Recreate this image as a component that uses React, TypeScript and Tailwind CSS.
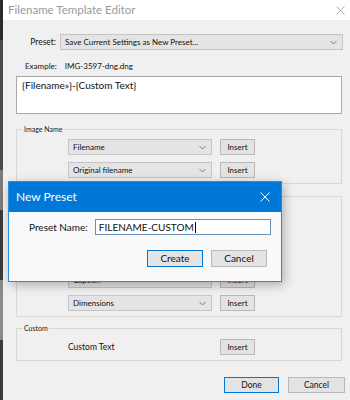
import React from "react";

function Chevron() {
  return (
    <svg width="7" height="5" viewBox="0 0 7 5" className="shrink-0">
      <path d="M0.5 1 L3.5 4 L6.5 1" fill="none" stroke="#707070" strokeWidth="0.9" />
    </svg>
  );
}

function Select({ label, w }: { label: string; w: string }) {
  return (
    <div className={`${w} h-[16px] flex items-center justify-between border border-[#c4c4c4] bg-[#e4e4e4] pl-[4px] pr-[5px] text-[8px] text-[#111]`}>
      <span>{label}</span>
      <Chevron />
    </div>
  );
}

function SmallBtn({ label }: { label: string }) {
  return (
    <div className="w-[35px] h-[16px] flex items-center justify-center border border-[#b9b9b9] bg-[#e3e3e3] text-[8px] text-[#111]">
      {label}
    </div>
  );
}

function Row({ label, blank }: { label: string; blank?: boolean }) {
  return (
    <div className="flex items-center gap-[8px] pl-[51px]">
      <Select label={label} w="w-[144px]" />
      <SmallBtn label={blank ? "" : "Insert"} />
    </div>
  );
}

export default function App() {
  return (
    <div className="w-[350px] h-[400px] relative overflow-hidden flex bg-[#333] font-['Lato','Noto_Sans',sans-serif]">
      <div className="w-[3px] shrink-0 flex flex-col">
        <div className="h-[40px] bg-[#2a2a2a]" />
        <div className="h-[130px] bg-[#4a4a4a]" />
        <div className="h-[40px] bg-[#7a7a7a]" />
        <div className="h-[70px] bg-[#3a3a3a]" />
        <div className="h-[60px] bg-[#8a8a8a]" />
        <div className="flex-1 bg-[#3a3a3a]" />
      </div>
      <div className="w-[347px] flex flex-col bg-[#f0f0f0]">
        {/* title bar */}
        <div className="h-[20px] bg-white flex items-center justify-between pl-[5px] pr-[5px]">
          <span className="text-[11.5px] text-[#9a9a9a] leading-none">Filename Template Editor</span>
          <svg width="9" height="9" viewBox="0 0 9 9">
            <path d="M0.5 0.5 L8.5 8.5 M8.5 0.5 L0.5 8.5" stroke="#9a9a9a" strokeWidth="0.8" />
          </svg>
        </div>
        {/* preset */}
        <div className="mt-[14px] h-[16px] flex items-center">
          <div className="w-[53px] text-right text-[8.5px] text-[#111]">Preset:</div>
          <div className="ml-[4px]">
            <Select label="Save Current Settings as New Preset..." w="w-[283px]" />
          </div>
        </div>
        {/* example */}
        <div className="mt-[10px] h-[12px] pl-[22px] flex items-center text-[8px] text-[#111]">
          <span>Example:</span>
          <span className="ml-[8px]">IMG-3597-dng.dng</span>
        </div>
        {/* textarea */}
        <div className="mt-[4px] ml-[13px] w-[326px] h-[38px] bg-white border border-[#a8a8a8] pl-[5px] pt-[1px] text-[10px] text-[#111]">
          {"{Filename»}-{Custom Text}"}
        </div>
        {/* Image Name */}
        <fieldset className="mt-[10px] ml-[13px] w-[326px] border border-[#d8d8d8] pt-[5px] pb-[5px] flex flex-col gap-[7px]">
          <legend className="ml-[6px] px-[1px] text-[7px] leading-[10px] text-[#222]">Image Name</legend>
          <Row label="Filename" />
          <Row label="Original filename" />
        </fieldset>
        {/* Metadata (mostly hidden by dialog) */}
        <fieldset className="mt-[12px] ml-[13px] w-[326px] border border-[#d8d8d8] pt-[6px] pb-[5px] flex flex-col gap-[7px]">
          <Row label="" blank />
          <Row label="" blank />
          <Row label="" blank />
          <Row label="Caption" />
          <Row label="Dimensions" />
        </fieldset>
        {/* Custom */}
        <fieldset className="mt-[6px] ml-[13px] w-[326px] border border-[#d8d8d8] pt-[6px] pb-[5px]">
          <legend className="ml-[6px] px-[1px] text-[7px] leading-[10px] text-[#222]">Custom</legend>
          <div className="flex items-center gap-[8px] pl-[51px]">
            <div className="w-[144px] text-[8.5px] text-[#111]">Custom Text</div>
            <SmallBtn label="Insert" />
          </div>
        </fieldset>
        {/* footer */}
        <div className="mt-[16px] flex justify-end gap-[9px] pr-[5px]">
          <div className="w-[55px] h-[16px] flex items-center justify-center border border-[#0078d7] bg-[#e3e3e3] text-[8.5px] text-[#111]">Done</div>
          <div className="w-[57px] h-[16px] flex items-center justify-center border border-[#b9b9b9] bg-[#e3e3e3] text-[8.5px] text-[#111]">Cancel</div>
        </div>
      </div>

      {/* New Preset dialog */}
      <div className="absolute left-[8px] top-[181px] w-[274px] h-[101px] border border-[#2b8ad9] bg-[#f9f9f9] shadow-[2px_3px_10px_rgba(0,0,0,0.28)] flex flex-col">
        <div className="h-[30px] bg-[#0078d7] flex items-center justify-between pl-[7px] pr-[11px]">
          <span className="text-[12px] text-white">New Preset</span>
          <svg width="10" height="10" viewBox="0 0 10 10">
            <path d="M0.5 0.5 L9.5 9.5 M9.5 0.5 L0.5 9.5" stroke="#ffffff" strokeWidth="1" />
          </svg>
        </div>
        <div className="mt-[7px] flex items-center pl-[20px]">
          <span className="text-[10px] text-[#111]">Preset Name:</span>
          <div className="ml-[7px] w-[176px] h-[16px] bg-white border border-[#6b8fb5] flex items-center pl-[3px] text-[10px] text-[#111]">
            <span>FILENAME-CUSTOM</span>
            <span className="ml-[1px] w-[1px] h-[11px] bg-black" />
          </div>
        </div>
        <div className="mt-[15px] flex justify-end gap-[8px] pr-[14px]">
          <div className="w-[56px] h-[17px] flex items-center justify-center border border-[#0078d7] bg-[#e4e4e4] text-[10px] text-[#111]">Create</div>
          <div className="w-[56px] h-[17px] flex items-center justify-center border border-[#b9b9b9] bg-[#e4e4e4] text-[10px] text-[#111]">Cancel</div>
        </div>
      </div>
    </div>
  );
}
